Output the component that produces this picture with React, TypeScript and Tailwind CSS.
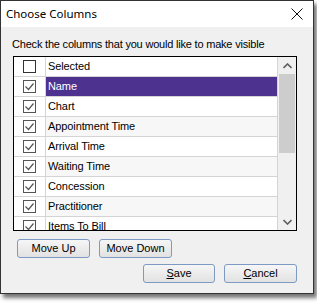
const rows = [
  { label: "Selected", checked: false },
  { label: "Name", checked: true },
  { label: "Chart", checked: true },
  { label: "Appointment Time", checked: true },
  { label: "Arrival Time", checked: true },
  { label: "Waiting Time", checked: true },
  { label: "Concession", checked: true },
  { label: "Practitioner", checked: true },
  { label: "Items To Bill", checked: true },
];

function Box({ checked }: { checked: boolean }) {
  return (
    <div
      className={`w-[13px] h-[13px] border bg-white flex items-center justify-center ${
        checked ? "border-[#555]" : "border-[#333]"
      }`}
    >
      {checked && (
        <svg width="11" height="11" viewBox="0 0 11 11">
          <path d="M1.5 5.5 L4.5 8.5 L9.5 2.5" fill="none" stroke="#555" strokeWidth="1.2" />
        </svg>
      )}
    </div>
  );
}

function Btn({ children, w }: { children: React.ReactNode; w: string }) {
  return (
    <div
      className={`${w} h-[19px] rounded-[3px] border border-[#7d9ac4] bg-gradient-to-b from-[#f6f6f6] to-[#e2e2e2] flex items-center justify-center text-[11px] text-black`}
    >
      {children}
    </div>
  );
}

export default function App() {
  return (
    <div className="w-[317px] h-[303px] bg-white overflow-hidden font-['Liberation_Sans',sans-serif]">
      <div className="w-[314px] h-[294px] border border-[#333] bg-[#f0f0f0] shadow-[3px_4px_4px_rgba(0,0,0,0.55)] flex flex-col">
        {/* title bar */}
        <div className="h-[26px] bg-white flex items-center justify-between pl-[5px] pr-[10px]">
          <span className="text-[11.5px] font-['Noto_Sans',sans-serif] text-black">Choose Columns</span>
          <svg width="12" height="12" viewBox="0 0 12 12">
            <path d="M0.5 0.5 L11.5 11.5 M11.5 0.5 L0.5 11.5" stroke="#111" strokeWidth="1" />
          </svg>
        </div>

        <div className="pl-[11px] pt-[10px] text-[11px] tracking-[-0.2px] text-black leading-[14px]">
          Check the columns that you would like to make visible
        </div>

        {/* list */}
        <div className="ml-[12px] mt-[5px] w-[284px] h-[175px] border border-black bg-white flex overflow-hidden">
          <div className="flex-1 flex flex-col">
            {rows.map((r, i) => (
              <div
                key={r.label}
                className={`h-[20px] shrink-0 flex border-b border-[#d4d4d4] ${
                  i === 1 ? "bg-[#4e3290] text-white" : i % 2 === 1 ? "bg-[#f7f7f7]" : "bg-white"
                }`}
              >
                <div className="w-[32px] shrink-0 flex items-center justify-center border-r border-[#d4d4d4] bg-white">
                  <Box checked={r.checked} />
                </div>
                <div className="pl-[2px] flex items-center text-[11px] tracking-[-0.1px]">{r.label}</div>
              </div>
            ))}
          </div>
          {/* scrollbar */}
          <div className="w-[19px] border-l border-[#d4d4d4] bg-[#f0f0f0] flex flex-col items-center">
            <div className="h-[17px] w-full flex items-center justify-center">
              <svg width="9" height="6" viewBox="0 0 9 6">
                <path d="M0.5 5 L4.5 1 L8.5 5" fill="none" stroke="#606060" strokeWidth="1.6" />
              </svg>
            </div>
            <div className="w-[16px] h-[79px] bg-[#cdcdcd]" />
            <div className="flex-1" />
            <div className="h-[17px] w-full flex items-center justify-center">
              <svg width="9" height="6" viewBox="0 0 9 6">
                <path d="M0.5 1 L4.5 5 L8.5 1" fill="none" stroke="#606060" strokeWidth="1.6" />
              </svg>
            </div>
          </div>
        </div>

        <div className="flex gap-[9px] pl-[16px] mt-[8px]">
          <Btn w="w-[73px]">Move Up</Btn>
          <Btn w="w-[73px]">Move Down</Btn>
        </div>
        <div className="flex gap-[9px] pl-[142px] mt-[6px]">
          <Btn w="w-[72px]">
            <span><u>S</u>ave</span>
          </Btn>
          <Btn w="w-[73px]">
            <span><u>C</u>ancel</span>
          </Btn>
        </div>
      </div>
    </div>
  );
}
